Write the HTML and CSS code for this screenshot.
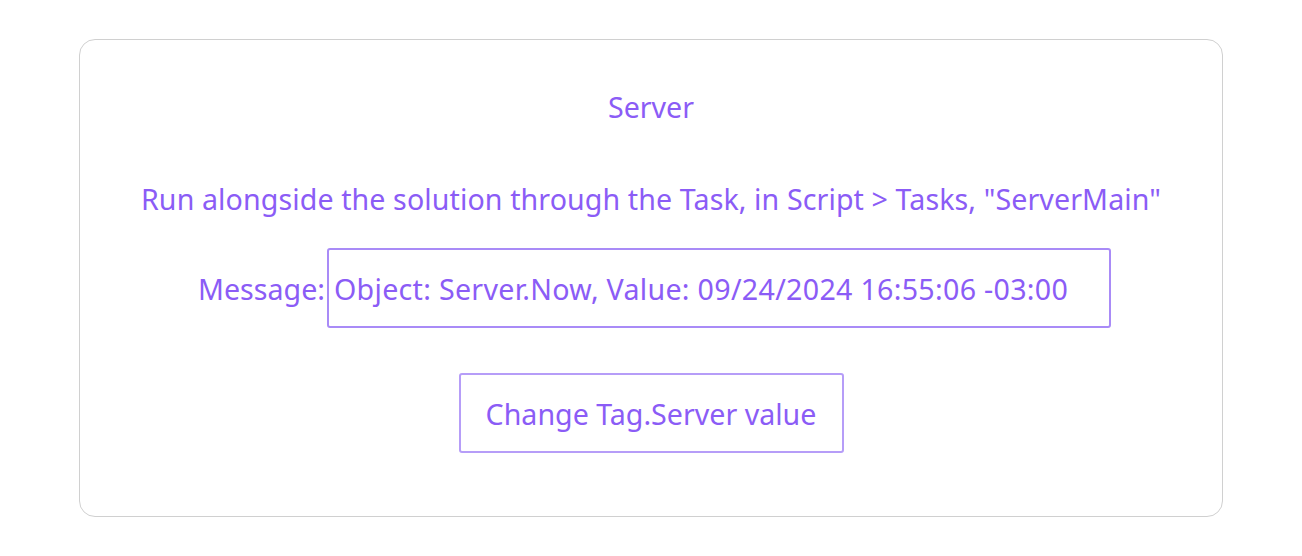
FILE: index.html
```html
<!DOCTYPE html>
<html>
<head>
<meta charset="utf-8">
<link rel="stylesheet" href="styles.css">
</head>
<body>
<div class="card">
  <div class="title">Server</div>
  <div class="desc">Run alongside the solution through the Task, in Script &gt; Tasks, "ServerMain"</div>
  <div class="row">
    <span class="label">Message:</span>
    <div class="field">Object: Server.Now, Value: 09/24/2024 16:55:06 -03:00</div>
  </div>
  <button class="btn">Change Tag.Server value</button>
</div>
</body>
</html>
```
FILE: styles.css
```css
html, body { margin: 0; padding: 0; background: #fff; }
body {
  padding: 39px 79px;
  font-family: "Noto Sans", "Open Sans", sans-serif;
  color: #8b5cf6;
}
.card {
  box-sizing: border-box;
  height: 478px;
  border: 1.5px solid #d0d0d0;
  border-radius: 16px;
  display: flex;
  flex-direction: column;
  align-items: center;
}
.title {
  font-size: 28.6px;
  line-height: 36px;
  margin-top: 49px;
}
.desc {
  font-size: 28.6px;
  line-height: 36px;
  margin-top: 56px;
  letter-spacing: 0.1px;
}
.row {
  display: flex;
  align-items: center;
  margin-top: 31px;
  font-size: 28.6px;
  margin-left: 7px;
}
.label { margin-right: 2px; }
.field {
  box-sizing: border-box;
  width: 784px;
  height: 80px;
  border: 2px solid #a98bf7;
  border-radius: 3px;
  display: flex;
  align-items: center;
  padding-left: 5px;
  letter-spacing: 0.3px;
}
.btn {
  box-sizing: border-box;
  margin-top: 45px;
  width: 385px;
  height: 80px;
  background: #fff;
  border: 2px solid #b69df8;
  border-radius: 3px;
  font-family: inherit;
  font-size: 28.6px;
  color: #8b5cf6;
  padding: 0;
}
```
